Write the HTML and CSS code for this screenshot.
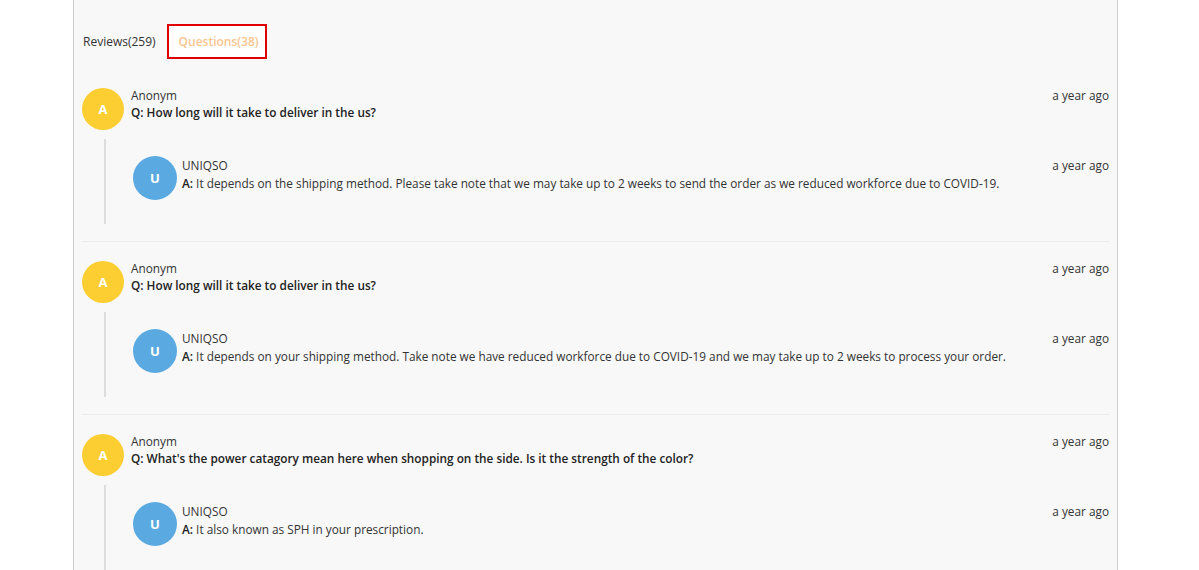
FILE: index.html
```html
<!DOCTYPE html>
<html>
<head>
<meta charset="utf-8">
<link rel="stylesheet" href="styles.css">
</head>
<body>
<div class="panel">
  <div class="tabs">
    <span class="tab">Reviews(259)</span>
    <span class="tab tab-active">Questions(38)</span>
  </div>

  <div class="qa">
    <div class="row row-q">
      <div class="avatar avatar-q">A</div>
      <div class="body">
        <div class="name">Anonym</div>
        <div class="text"><b>Q: How long will it take to deliver in the us?</b></div>
      </div>
      <div class="time">a year ago</div>
    </div>
    <div class="answers">
      <div class="row row-a">
        <div class="avatar avatar-a">U</div>
        <div class="body">
          <div class="name">UNIQSO</div>
          <div class="text"><b>A:</b> It depends on the shipping method. Please take note that we may take up to 2 weeks to send the order as we reduced workforce due to COVID-19.</div>
        </div>
        <div class="time">a year ago</div>
      </div>
    </div>
  </div>

  <div class="qa">
    <div class="row row-q">
      <div class="avatar avatar-q">A</div>
      <div class="body">
        <div class="name">Anonym</div>
        <div class="text"><b>Q: How long will it take to deliver in the us?</b></div>
      </div>
      <div class="time">a year ago</div>
    </div>
    <div class="answers">
      <div class="row row-a">
        <div class="avatar avatar-a">U</div>
        <div class="body">
          <div class="name">UNIQSO</div>
          <div class="text"><b>A:</b> It depends on your shipping method. Take note we have reduced workforce due to COVID-19 and we may take up to 2 weeks to process your order.</div>
        </div>
        <div class="time">a year ago</div>
      </div>
    </div>
  </div>

  <div class="qa">
    <div class="row row-q">
      <div class="avatar avatar-q">A</div>
      <div class="body">
        <div class="name">Anonym</div>
        <div class="text"><b>Q: What's the power catagory mean here when shopping on the side. Is it the strength of the color?</b></div>
      </div>
      <div class="time">a year ago</div>
    </div>
    <div class="answers">
      <div class="row row-a">
        <div class="avatar avatar-a">U</div>
        <div class="body">
          <div class="name">UNIQSO</div>
          <div class="text"><b>A:</b> It also known as SPH in your prescription.</div>
        </div>
        <div class="time">a year ago</div>
      </div>
    </div>
  </div>
</div>
</body>
</html>
```

FILE: styles.css
```css
html, body {
  margin: 0;
  padding: 0;
  background: #ffffff;
  overflow: hidden;
}

body {
  font-family: "Open Sans", "Liberation Sans", sans-serif;
  font-size: 11.8px;
  color: #333333;
}

.panel {
  margin-left: 73px;
  width: 1045px;
  min-height: 570px;
  background: #f8f8f8;
  border-left: 1px solid #cfcfcf;
  border-right: 1px solid #cfcfcf;
  padding: 24px 8px 0 8px;
  box-sizing: border-box;
}

.tabs {
  display: flex;
  align-items: center;
  gap: 11px;
  height: 35px;
}

.tab {
  font-size: 12px;
  color: #333333;
  padding-left: 1px;
}

.tab-active {
  color: #f9c58f;
  font-weight: 600;
  border: 2px solid #e00000;
  height: 35px;
  box-sizing: border-box;
  padding: 0 10px;
  display: flex;
  align-items: center;
  background: #ffffff;
  width: 100px;
}

.qa {
  padding-top: 29px;
  padding-bottom: 17px;
  border-bottom: 1px solid #ececec;
}

.qa + .qa {
  padding-top: 19px;
}

.row {
  display: flex;
  align-items: flex-start;
}

.avatar {
  width: 42px;
  height: 42px;
  border-radius: 50%;
  color: #ffffff;
  font-weight: 700;
  font-size: 13px;
  display: flex;
  align-items: center;
  justify-content: center;
  flex-shrink: 0;
}

.avatar-q {
  background: #fcce31;
}

.avatar-a {
  width: 44px;
  height: 44px;
  background: #5aaae1;
}

.body {
  flex: 1;
  padding-left: 7px;
  line-height: 17px;
}

.row-q .body,
.row-q .time {
  margin-top: -1px;
}

.row-a .body {
  padding-left: 5px;
  line-height: 18px;
}

.row-a .time {
  padding-top: 1px;
}

.name {
  color: #333333;
}

.text b {
  font-weight: 600;
  color: #222222;
}

.time {
  line-height: 17px;
  color: #333333;
  white-space: nowrap;
}

.answers {
  margin-top: 9px;
  margin-left: 22px;
  border-left: 2px solid #dddddd;
  padding: 17px 0 24px 27px;
}
```
